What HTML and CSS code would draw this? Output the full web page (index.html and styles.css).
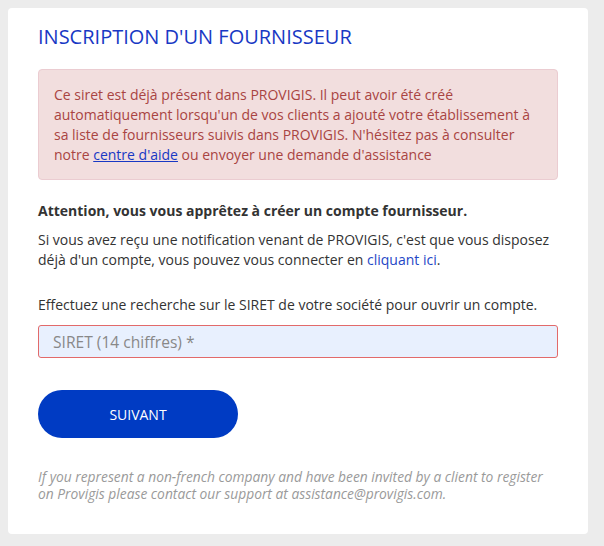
FILE: index.html
```html
<!DOCTYPE html>
<html lang="fr">
<head>
    <meta charset="UTF-8">
    <meta name="viewport" content="width=device-width, initial-scale=1.0">
    <title>Inscription d'un fournisseur</title>
    <link rel="stylesheet" href="styles.css">
</head>
<body>
    <div class="card">
        <h1 class="title">INSCRIPTION D'UN FOURNISSEUR</h1>

        <div class="alert">
            Ce siret est déjà présent dans PROVIGIS. Il peut avoir été créé automatiquement lorsqu'un de vos clients a ajouté votre établissement à sa liste de fournisseurs suivis dans PROVIGIS. N'hésitez pas à consulter notre <a href="#" class="alert-link">centre d'aide</a> ou envoyer une demande d'assistance
        </div>

        <p class="warning">Attention, vous vous apprêtez à créer un compte fournisseur.</p>
        <p class="info">Si vous avez reçu une notification venant de PROVIGIS, c'est que vous disposez déjà d'un compte, vous pouvez vous connecter en <a href="#" class="link">cliquant ici</a>.</p>

        <form class="siret-form">
            <label for="siretInput" class="hint">Effectuez une recherche sur le SIRET de votre société pour ouvrir un compte.</label>
            <input id="siretInput" class="siret-input" type="text" placeholder="SIRET (14 chiffres) *" autocomplete="off" />
            <button type="submit" class="btn-next">SUIVANT</button>
        </form>

        <p class="foreign">If you represent a non-french company and have been invited by a client to register on Provigis please contact our support at assistance@provigis.com.</p>
    </div>
</body>
</html>
```

FILE: styles.css
```css
/* Base */
body {
    margin: 8px;
    background-color: #ececec;
    font-family: "Open Sans", "Liberation Sans", sans-serif;
    font-size: 14px;
    line-height: 20px;
    color: #333;
}

.card {
    width: 580px;
    box-sizing: border-box;
    padding: 15px 30px 32px;
    background: #fff;
    border-radius: 4px;
}

.title {
    margin: 0 0 18px;
    font-size: 20px;
    font-weight: 400;
    line-height: 28px;
    color: #1838c4;
}

.alert {
    padding: 15px 15px 14px;
    background-color: #f2dede;
    border: 1px solid #ebccd1;
    border-radius: 4px;
    color: #a94442;
}

.alert-link {
    color: #1838c4;
    text-decoration: underline;
}

.warning {
    margin: 21px 0 9px;
    font-weight: 700;
}

.info {
    margin: 0 0 25px;
}

.link {
    color: #2447c6;
    text-decoration: none;
}

.siret-form {
    display: flex;
    flex-direction: column;
    align-items: flex-start;
}

.hint {
    display: block;
    margin-bottom: 10px;
}

.siret-input {
    width: 100%;
    height: 33px;
    box-sizing: border-box;
    padding: 0 14px;
    border: 1px solid #e26a6a;
    border-radius: 3px;
    background-color: #e8f0fe;
    font-family: inherit;
    font-size: 15.6px;
    color: #555;
}

.siret-input::placeholder {
    color: #888;
}

.btn-next {
    margin-top: 32px;
    width: 200px;
    height: 48px;
    border: none;
    border-radius: 24px;
    background-color: #003bc3;
    color: #fff;
    font-family: inherit;
    font-size: 14px;
    font-weight: 400;
    cursor: pointer;
}

.foreign {
    margin: 30px 0 0;
    font-size: 13.8px;
    line-height: 17px;
    font-style: italic;
    color: #9a9a9a;
}
```
